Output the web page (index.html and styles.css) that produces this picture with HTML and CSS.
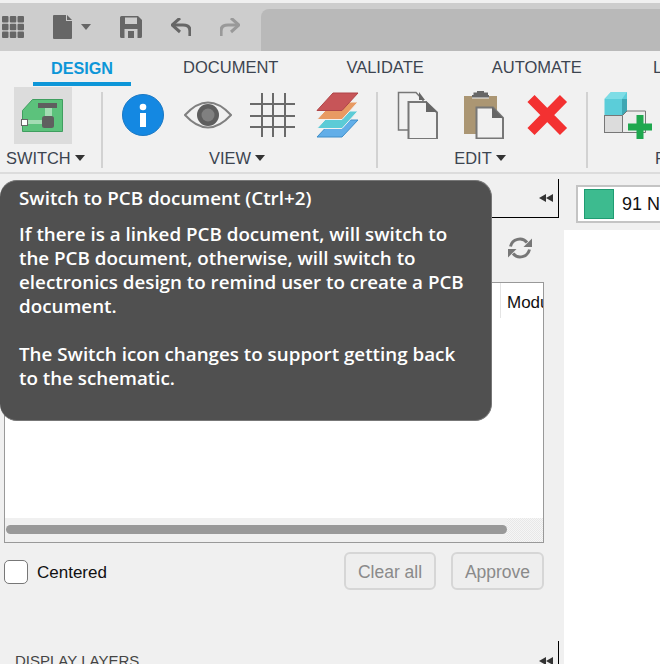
FILE: index.html
```html
<!DOCTYPE html>
<html lang="en">
<head>
<meta charset="utf-8">
<title>Switch tooltip</title>
<link rel="stylesheet" href="styles.css">
</head>
<body>
<div class="app">
  <header class="titlebar">
    <div class="toolbar">
      <svg class="tb-grid" width="22" height="22" viewBox="0 0 22 22"><g fill="#666"><rect x="0" y="0" width="6.5" height="6.5" rx="1"/><rect x="7.8" y="0" width="6.5" height="6.5" rx="1"/><rect x="15.5" y="0" width="6.5" height="6.5" rx="1"/><rect x="0" y="7.8" width="6.5" height="6.5" rx="1"/><rect x="7.8" y="7.8" width="6.5" height="6.5" rx="1"/><rect x="15.5" y="7.8" width="6.5" height="6.5" rx="1"/><rect x="0" y="15.5" width="6.5" height="6.5" rx="1"/><rect x="7.8" y="15.5" width="6.5" height="6.5" rx="1"/><rect x="15.5" y="15.5" width="6.5" height="6.5" rx="1"/></g></svg>
      <div class="tb-file">
        <svg width="19" height="24" viewBox="0 0 19 24"><path d="M1 0H13V6H19V23a1 1 0 0 1-1 1H1a1 1 0 0 1-1-1V1a1 1 0 0 1 1-1Z" fill="#666"/><path d="M14 0L19 5H14Z" fill="#666"/></svg>
        <svg width="10" height="6" viewBox="0 0 10 6"><path d="M0 0H10L5 6Z" fill="#666"/></svg>
      </div>
      <svg width="22" height="22" viewBox="0 0 22 22"><path d="M1.500 0H18L22 4V20.500A1.500 1.500 0 0 1 20.500 22H1.500A1.500 1.500 0 0 1 0 20.500V1.500A1.500 1.500 0 0 1 1.500 0Z" fill="#666"/><rect x="5" y="1.500" width="12" height="6.500" fill="#ccc"/><rect x="4.500" y="13" width="13" height="9" fill="#ccc"/><rect x="8" y="15" width="6" height="7" fill="#666"/></svg>
      <svg width="20" height="18" viewBox="0 0 20 18"><path d="M19 18V13Q19 7 12 7H3" fill="none" stroke="#666" stroke-width="3.200"/><path d="M9 0L1 7L9 14" fill="none" stroke="#666" stroke-width="3"/></svg>
      <svg width="20" height="18" viewBox="0 0 20 18"><path d="M1 18V13Q1 7 8 7H17" fill="none" stroke="#999" stroke-width="3.200"/><path d="M11 0L19 7L11 14" fill="none" stroke="#999" stroke-width="3"/></svg>
      <div class="search"></div>
    </div>
  </header>

  <section class="ribbon">
    <nav class="tabs">
      <span class="tab tab-active">DESIGN</span>
      <span class="tab">DOCUMENT</span>
      <span class="tab">VALIDATE</span>
      <span class="tab">AUTOMATE</span>
      <span class="tab tab-last">L</span>
    </nav>
    <div class="groups">
      <div class="group group-switch">
        <div class="switch-btn">
          <svg width="58" height="57" viewBox="0 0 58 57"><path d="M8.500 23.500L18.500 12.500H48.500V44.500H8.500Z" fill="#5cc27c" stroke="#3f9e5f"/><rect x="31" y="20" width="7" height="10" fill="#a3dcb3"/><rect x="13" y="33" width="16" height="4" fill="#a3dcb3"/><rect x="24" y="16" width="19" height="5" fill="#5f5f5f"/><rect x="28" y="29" width="12" height="12" rx="2.500" fill="#5f5f5f"/><rect x="7.500" y="32.500" width="6" height="6" fill="#fff" stroke="#666"/></svg>
        </div>
        <div class="group-label">SWITCH<i class="caret"></i></div>
      </div>
      <div class="group group-view">
        <div class="icons">
          <svg width="48" height="48" viewBox="0 0 48 48"><circle cx="24" cy="24" r="20.500" fill="#1488e2" stroke="#1a78c4"/><circle cx="24" cy="16" r="3.300" fill="#fff"/><rect x="21" y="22" width="6" height="14" fill="#fff"/></svg>
          <svg width="48" height="48" viewBox="0 0 48 48"><path d="M1 24Q24 -1 47 24Q24 49 1 24Z" fill="none" stroke="#808080" stroke-width="2"/><circle cx="24" cy="24" r="11" fill="#5e5e5e"/><circle cx="24" cy="24" r="6.500" fill="#808080"/></svg>
          <svg width="48" height="48" viewBox="0 0 48 48"><path d="M14 2V46M25 2V46M37 2V46M2 13H47M2 25H47M2 36H47" fill="none" stroke="#6a6a6a" stroke-width="2"/></svg>
          <svg width="48" height="48" viewBox="0 0 48 48"><path d="M4 46L20 29H45L29 46Z" fill="#62aee8" stroke="#3f8ec9"/><path d="M4 37.500L20 20H45L29 37.500Z" fill="#5ccbd6" stroke="#f1f1f1"/><path d="M4 28.500L20 11H45L29 28.500Z" fill="#e89a62" stroke="#f1f1f1"/><path d="M4 19.500L20 2H45L29 19.500Z" fill="#c75558" stroke="#b04548"/></svg>
        </div>
        <div class="group-label">VIEW<i class="caret"></i></div>
      </div>
      <div class="group group-edit">
        <div class="icons">
          <svg width="48" height="48" viewBox="0 0 48 48"><path d="M4.500 1.500H22L29 9V39H4.500Z" fill="#f1f1f1" stroke="#777" stroke-width="1.500"/><path d="M25 1L31 9H25Z" fill="#666"/><path d="M14.500 11H32L43 21.500V48H14.500Z" fill="#f1f1f1" stroke="#777" stroke-width="2"/><path d="M32 10L43 21H32Z" fill="#666"/></svg>
          <svg width="48" height="48" viewBox="0 0 48 48"><path d="M5 5H38V43H5Z" fill="#ab9673"/><path d="M13 4H14.500V1.500H18V0H25V1.500H29V4H30V7H13Z" fill="#666"/><path d="M13 7H30" stroke="#f1f1f1"/><path d="M17.500 16.500H34L44 27V47.500H17.500Z" fill="#f1f1f1" stroke="#777" stroke-width="2"/><path d="M33 16L44 27H33Z" fill="#666"/></svg>
          <svg width="48" height="48" viewBox="0 0 48 48"><path d="M8 7.500L40.500 40.500M40.500 7.500L8 40.500" fill="none" stroke="#f33131" stroke-width="10"/></svg>
        </div>
        <div class="group-label">EDIT<i class="caret"></i></div>
      </div>
      <div class="group group-place">
        <div class="icons">
          <svg width="48" height="48" viewBox="0 0 48 48"><path d="M0.500 24.500V8L7 1H23V24.500Z" fill="#5bcdd9"/><path d="M0.500 8L7 1H23L18 8Z" fill="#7edde6"/><path d="M18 8H23V24H18Z" fill="#3fa7b3"/><rect x="0.500" y="24.500" width="18" height="17" fill="#dcdcdc" stroke="#777"/><path d="M18.500 24.500L23 20H41.500V41.500H18.500Z" fill="#ededed" stroke="#777"/><path d="M32.500 24H39.500V32.500H48V39.500H39.500V48H32.500V39.500H24V32.500H32.500Z" fill="#1fa84f"/></svg>
        </div>
        <div class="group-label">P</div>
      </div>
    </div>
  </section>

  <main class="workspace">
    <aside class="panel">
      <div class="panel-head">
        <span></span>
        <i class="collapse"></i>
      </div>
      <div class="refresh-row">
        <svg width="26" height="24" viewBox="0 0 26 24"><path d="M3.500 10.500A9.500 9.500 0 0 1 20 6.500" fill="none" stroke="#777" stroke-width="3"/><path d="M25 2.500V11H16.500Z" fill="#777"/><path d="M22.500 13.500A9.500 9.500 0 0 1 6 17.500" fill="none" stroke="#777" stroke-width="3"/><path d="M1 21.500V13H9.500Z" fill="#777"/></svg>
      </div>
      <div class="table">
        <div class="table-head">
          <span class="col col-last">Modu</span>
        </div>
        <div class="table-body"></div>
        <div class="scroll-row">
          <div class="scroll-track"><div class="scroll-thumb"></div></div>
          <div class="scroll-corner"></div>
        </div>
      </div>
      <div class="actions">
        <label class="check"><span class="check-box"></span><span class="check-text">Centered</span></label>
        <div class="buttons">
          <span class="btn btn-clear">Clear all</span>
          <span class="btn btn-approve">Approve</span>
        </div>
      </div>
      <div class="panel-head panel-head-layers">
        <span class="panel-title">DISPLAY LAYERS</span>
        <i class="collapse"></i>
      </div>
    </aside>
    <div class="canvas-col">
      <div class="net-chip"><span class="swatch"></span><span class="net-text">91 N</span></div>
      <div class="canvas"></div>
    </div>
  </main>

  <div class="tooltip">
    <div class="tip-title">Switch to PCB document (Ctrl+2)</div>
    <p class="tip-body">If there is a linked PCB document, will switch to<br>the PCB document, otherwise, will switch to<br>electronics design to remind user to create a PCB<br>document.<br><br>The Switch icon changes to support getting back<br>to the schematic.</p>
  </div>
</div>
</body>
</html>
```
FILE: styles.css
```css
* { box-sizing: border-box; }
html, body { margin: 0; padding: 0; }
body { background: #f0f0f0; font-family: "Liberation Sans", Arial, sans-serif; }
.app { position: relative; width: 660px; height: 664px; overflow: hidden; background: #f0f0f0; display: flex; flex-direction: column; }

.titlebar { height: 51px; flex: none; padding-top: 3px; background: #f0f0f0; }
.toolbar { height: 48px; background: #cdcdcd; display: flex; align-items: center; gap: 29px; padding-left: 2px; }
.tb-file { display: flex; align-items: center; gap: 9px; }
.search { flex: 1; align-self: flex-end; height: 42px; margin-left: -8px; background: #b9b9b9; border-top-left-radius: 8px; }

.ribbon { height: 123px; flex: none; background: #f1f1f1; border-bottom: 2px solid #dcdcdc; }
.tabs { display: flex; height: 35px; padding-left: 33px; gap: 32px; white-space: nowrap; }
.tab { padding: 7px 18px 0; font-size: 16.500px; line-height: 18px; color: #3c4450; border-bottom: 4px solid transparent; }
.tab-active { color: #0d96d8; font-weight: 700; font-size: 16.200px; padding-top: 8px; margin-right: 2px; border-bottom-color: #0d96d8; }
.tab-last { margin-left: 3px; }

.groups { display: flex; height: 87px; padding-top: 1px; }
.group { display: flex; flex-direction: column; flex: none; }
.group-switch { width: 103px; }
.group-view { width: 275px; }
.group-edit { width: 210px; }
.group-view, .group-edit, .group-place { position: relative; }
.group-view::before, .group-edit::before, .group-place::before { content: ""; position: absolute; left: -2px; top: 5px; width: 2px; height: 76px; background: #d2d2d2; }
.group-switch .group-label { justify-content: flex-start; padding-left: 6px; margin-top: 4px; }
.switch-btn { width: 58px; height: 57px; margin-left: 14px; background: #dcdcdc; }
.icons { display: flex; gap: 16.500px; padding: 4px 0 0 16px; height: 52px; margin-bottom: 9px; }
.icons svg { flex: none; }
.group-label { display: flex; align-items: center; justify-content: center; height: 20px; font-size: 16.400px; color: #3c4450; white-space: nowrap; }
.group-view .group-label { padding-right: 7px; }
.group-edit .group-label { padding-right: 6px; }
.group-place .group-label { justify-content: flex-start; padding-left: 67px; }
.caret { display: inline-block; width: 0; height: 0; margin-left: 4px; border-left: 5px solid transparent; border-right: 5px solid transparent; border-top: 6px solid #333; }

.workspace { flex: 1; display: flex; min-height: 0; }
.panel { width: 564px; flex: none; padding-top: 5px; }
.panel-head { width: 559px; height: 39px; display: flex; align-items: center; justify-content: space-between; padding: 0 5px 0 15px; border-right: 1px solid #000; border-bottom: 1px solid #000; }
.panel-head-layers { margin-top: 51px; border-bottom: 0; }
.panel-title { font-size: 15px; color: #444; }
.collapse { display: flex; flex: none; }
.collapse::before, .collapse::after { content: ""; width: 0; height: 0; border-top: 4px solid transparent; border-bottom: 4px solid transparent; border-right: 7px solid #333; }
.refresh-row { height: 64px; display: flex; align-items: center; justify-content: flex-end; padding: 5px 31px 10px 0; }
.table { width: 540px; height: 261px; margin-left: 4px; border: 1px solid #999; background: #fff; display: flex; flex-direction: column; overflow: hidden; }
.table-head { height: 35px; flex: none; display: flex; justify-content: flex-end; }
.col { width: 43px; padding: 3px 0 0 6px; border-left: 1px solid #e4e4e4; overflow: hidden; font-family: "Liberation Sans", sans-serif; font-size: 17px; line-height: 34px; color: #111; white-space: nowrap; }
.table-body { flex: 1; }
.scroll-row { height: 24px; flex: none; display: flex; background: #f0f0f0; }
.scroll-track { flex: 1; padding: 7px 0 0 1px; }
.scroll-thumb { height: 9px; border-radius: 5px; background: #999; }
.scroll-corner { width: 36px; background: repeating-conic-gradient(#e8e8e8 0 25%, #f6f6f6 0 50%) 0 0 / 2px 2px; }
.actions { display: flex; justify-content: space-between; align-items: center; width: 544px; height: 38px; margin-top: 9px; padding-left: 4px; }
.check { display: flex; align-items: center; gap: 9px; padding-top: 2px; font-family: "Liberation Sans", sans-serif; font-size: 17px; color: #111; }
.check-box { width: 24px; height: 24px; border: 1.500px solid #777; border-radius: 5px; background: #fff; }
.check-text { padding-top: 1px; }
.buttons { display: flex; gap: 15px; }
.btn { display: flex; align-items: center; justify-content: center; height: 38px; padding-top: 3px; border: 2px solid #d6d6d6; border-radius: 6px; background: #eee; color: #8a8a8a; font-size: 17.500px; }
.btn-clear { width: 92px; }
.btn-approve { width: 93px; }

.canvas-col { flex: 1; display: flex; flex-direction: column; min-width: 0; }
.net-chip { height: 38px; margin: 11px 0 7px 12px; padding-left: 6px; border: 2px solid #c4c4c4; border-right: 0; background: #fff; display: flex; align-items: center; gap: 8px; font-family: "Liberation Sans", sans-serif; font-size: 18px; color: #111; white-space: nowrap; }
.swatch { flex: none; width: 30px; height: 30px; background: #3dbb8f; border: 1px solid #1f9c72; }
.canvas { flex: 1; background: #fff; }

.tooltip { position: absolute; left: 0; top: 180px; width: 492px; height: 241px; padding: 5px 0 0 19px; background: #505050; border: 1px solid #777; border-left: 0; border-radius: 17px; color: #fff; font-family: "Open Sans", sans-serif; font-weight: 600; font-size: 18.800px; line-height: 24px; white-space: nowrap; }
.tip-title { margin-bottom: 12px; }
.tip-body { margin: 0; }
```
